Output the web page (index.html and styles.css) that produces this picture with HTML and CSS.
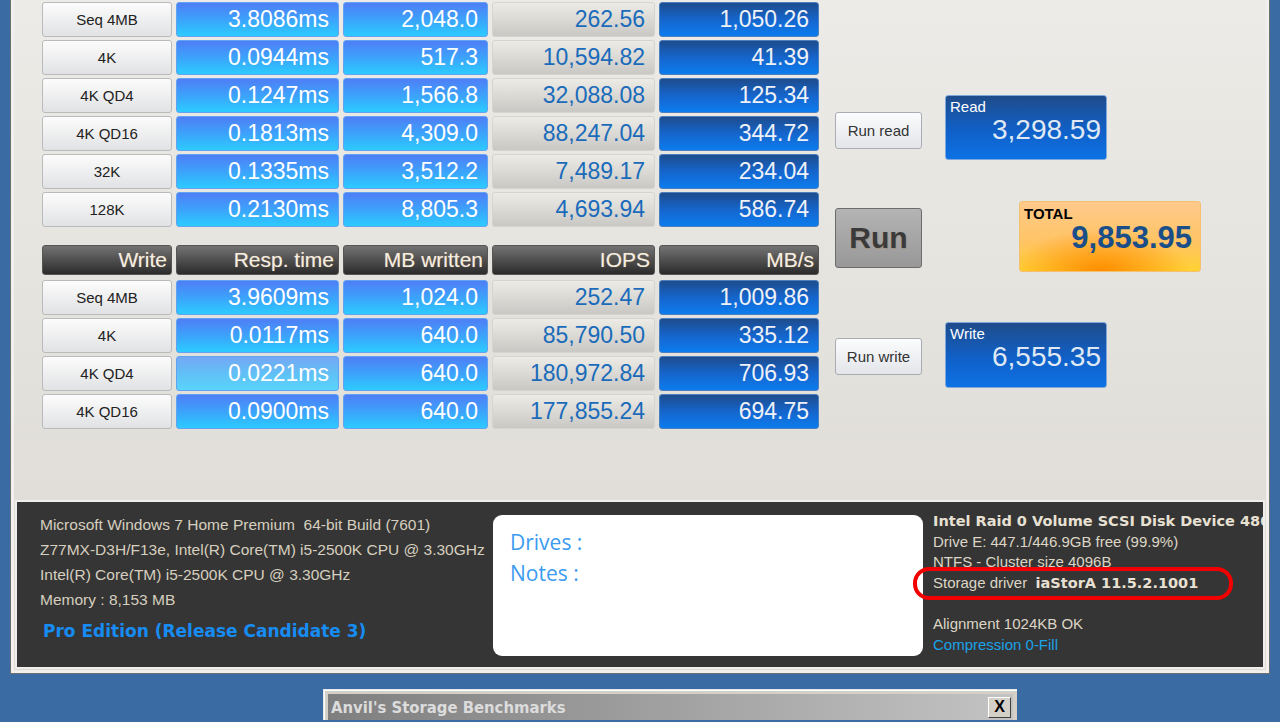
FILE: index.html
```html
<!DOCTYPE html>
<html lang="en">
<head>
    <meta charset="UTF-8">
    <title>Anvil's Storage Benchmarks</title>
    <link rel="stylesheet" href="styles.css">
</head>
<body>
    <div class="window">
        <div class="client">
            <div class="bench">
                <div class="tables">
                    <div class="grid read">
                        <div class="cell label">Seq 4MB</div>
                        <div class="cell resp">3.8086ms</div>
                        <div class="cell mb">2,048.0</div>
                        <div class="cell iops">262.56</div>
                        <div class="cell mbs">1,050.26</div>

                        <div class="cell label">4K</div>
                        <div class="cell resp">0.0944ms</div>
                        <div class="cell mb">517.3</div>
                        <div class="cell iops">10,594.82</div>
                        <div class="cell mbs">41.39</div>

                        <div class="cell label">4K QD4</div>
                        <div class="cell resp">0.1247ms</div>
                        <div class="cell mb">1,566.8</div>
                        <div class="cell iops">32,088.08</div>
                        <div class="cell mbs">125.34</div>

                        <div class="cell label">4K QD16</div>
                        <div class="cell resp">0.1813ms</div>
                        <div class="cell mb">4,309.0</div>
                        <div class="cell iops">88,247.04</div>
                        <div class="cell mbs">344.72</div>

                        <div class="cell label">32K</div>
                        <div class="cell resp">0.1335ms</div>
                        <div class="cell mb">3,512.2</div>
                        <div class="cell iops">7,489.17</div>
                        <div class="cell mbs">234.04</div>

                        <div class="cell label">128K</div>
                        <div class="cell resp">0.2130ms</div>
                        <div class="cell mb">8,805.3</div>
                        <div class="cell iops">4,693.94</div>
                        <div class="cell mbs">586.74</div>
                    </div>

                    <div class="grid write">
                        <div class="cell head">Write</div>
                        <div class="cell head">Resp. time</div>
                        <div class="cell head">MB written</div>
                        <div class="cell head">IOPS</div>
                        <div class="cell head">MB/s</div>

                        <div class="cell label">Seq 4MB</div>
                        <div class="cell resp">3.9609ms</div>
                        <div class="cell mb">1,024.0</div>
                        <div class="cell iops">252.47</div>
                        <div class="cell mbs">1,009.86</div>

                        <div class="cell label">4K</div>
                        <div class="cell resp">0.0117ms</div>
                        <div class="cell mb">640.0</div>
                        <div class="cell iops">85,790.50</div>
                        <div class="cell mbs">335.12</div>

                        <div class="cell label">4K QD4</div>
                        <div class="cell resp pale">0.0221ms</div>
                        <div class="cell mb">640.0</div>
                        <div class="cell iops">180,972.84</div>
                        <div class="cell mbs">706.93</div>

                        <div class="cell label">4K QD16</div>
                        <div class="cell resp">0.0900ms</div>
                        <div class="cell mb">640.0</div>
                        <div class="cell iops">177,855.24</div>
                        <div class="cell mbs">694.75</div>
                    </div>
                </div>

                <div class="side">
                    <div class="side-row row-read">
                        <button class="btn small">Run read</button>
                        <div class="score blue">
                            <div class="score-title">Read</div>
                            <div class="score-value">3,298.59</div>
                        </div>
                    </div>
                    <div class="side-row row-total">
                        <button class="btn run">Run</button>
                        <div class="score total">
                            <div class="score-title">TOTAL</div>
                            <div class="score-value">9,853.95</div>
                        </div>
                    </div>
                    <div class="side-row row-write">
                        <button class="btn small">Run write</button>
                        <div class="score blue">
                            <div class="score-title">Write</div>
                            <div class="score-value">6,555.35</div>
                        </div>
                    </div>
                </div>
            </div>

            <div class="info">
                <div class="sys">
                    <div>Microsoft Windows 7 Home Premium&nbsp; 64-bit Build (7601)</div>
                    <div>Z77MX-D3H/F13e, Intel(R) Core(TM) i5-2500K CPU @ 3.30GHz</div>
                    <div>Intel(R) Core(TM) i5-2500K CPU @ 3.30GHz</div>
                    <div>Memory : 8,153 MB</div>
                    <div class="edition">Pro Edition (Release Candidate 3)</div>
                </div>
                <div class="notes">
                    <div>Drives :</div>
                    <div>Notes :</div>
                </div>
                <div class="drive">
                    <div class="strong">Intel Raid 0 Volume SCSI Disk Device 480GB</div>
                    <div>Drive E: 447.1/446.9GB free (99.9%)</div>
                    <div>NTFS - Cluster size 4096B</div>
                    <div class="driver">Storage driver&nbsp; <b>iaStorA 11.5.2.1001</b><span class="ring"></span></div>
                    <div>&nbsp;</div>
                    <div>Alignment 1024KB OK</div>
                    <div class="link">Compression 0-Fill</div>
                </div>
            </div>
        </div>
    </div>

    <div class="dialog">
        <div class="dialog-title">
            <span>Anvil's Storage Benchmarks</span>
            <span class="close">X</span>
        </div>
    </div>
</body>
</html>
```

FILE: styles.css
```css
*{
    margin:0;
    padding:0;
    box-sizing:border-box;
}
html,body{
    height:100%;
    overflow:hidden;
}
body{
    background-color:#3a6ca3;
    font-family:"Liberation Sans", Arial, sans-serif;
}

/* main window */
.window{
    margin-left:10px;
    width:1260px;
    border:1px solid #6e6e6e;
    border-top:0;
    background-color:#f1f0ed;
    padding:0 3px 3px 3px;
}
.client{
    background:linear-gradient(#ecebe7, #dcd9d3);
    padding-bottom:1px;
}
.bench{
    display:flex;
    height:500px;
    padding:2px 0 0 28px;
}

/* result tables */
.grid{
    display:grid;
    grid-template-columns:130px 163px 145px 163px 160px;
    column-gap:4px;
    row-gap:3px;
    grid-auto-rows:35px;
}
.write{
    margin-top:18px;
    grid-template-rows:32px;
}
.write .head{
    margin-bottom:2px;
}
.cell{
    display:flex;
    align-items:center;
    justify-content:flex-end;
    padding-right:9px;
    border-radius:3px;
    font-size:23px;
    white-space:nowrap;
}
.label{
    justify-content:center;
    padding:0;
    font-size:15px;
    color:#222;
    background:linear-gradient(#fcfcfc, #e1e2e4);
    border:1px solid #b9babc;
}
.resp,
.mb{
    color:#fff;
    background:linear-gradient(#4f7ef6, #3aa6fb 55%, #2ccbff);
    border:1px solid #62a2f2;
}
.pale{
    background:linear-gradient(#74a8f4, #5fc2f6 55%, #5ad4fb);
}
.iops{
    color:#1a6bba;
    background:linear-gradient(#edebe6, #c9c8c4);
    border:1px solid #d6d4cf;
}
.mbs{
    color:#eef2f8;
    background:linear-gradient(#1e4c8d, #1565cc 50%, #0c7cee);
    border:1px solid #4c7fbf;
}
.head{
    padding-right:4px;
    font-size:21px;
    color:#f2eee4;
    text-shadow:0 0 1px rgba(255,190,110,.55);
    background:linear-gradient(#737373, #2b2b2b);
    border:1px solid #555;
}

/* buttons and score boxes */
.side{
    margin-left:16px;
    padding-top:93px;
}
.side-row{
    display:flex;
    align-items:flex-start;
}
.row-read{ height:65px; }
.row-total{ height:71px; margin-top:41px; }
.row-write{ height:66px; margin-top:50px; }
.btn{
    width:87px;
    border-radius:3px;
    font-family:"Liberation Sans", Arial, sans-serif;
    cursor:pointer;
}
.small{
    height:37px;
    margin-top:17px;
    font-size:15px;
    color:#333;
    background:linear-gradient(#fbfcfd, #e3e5e9);
    border:1px solid #a9adb3;
}
.row-write .small{
    margin-top:16px;
}
.run{
    height:60px;
    margin-top:7px;
    font-size:30px;
    font-weight:bold;
    color:#3a3a3a;
    text-shadow:1px 1px 0 rgba(160,120,70,.35);
    background:linear-gradient(#b4b4b4, #989898);
    border:1px solid #6c6c6c;
}
.score{
    border-radius:3px;
    height:100%;
    padding:2px 5px 0 4px;
}
.blue{
    width:162px;
    margin-left:23px;
    color:#dfe8f3;
    background:linear-gradient(#1f4c8b, #1060c8 55%, #0d72e4);
    border:1px solid #7ea7dc;
}
.score-title{
    font-size:15px;
    line-height:18px;
    color:#fff;
}
.score-value{
    text-align:right;
    font-size:28px;
    line-height:28px;
}
.total{
    width:182px;
    margin-left:97px;
    background:
        radial-gradient(ellipse 50% 60% at 45% 100%, #ff8c00, rgba(255,150,20,0)),
        linear-gradient(#ffc98c, #ffc462 60%, #ffd232);
    border:1px solid #f5c070;
}
.total .score-title{
    font-weight:bold;
    color:#000;
    line-height:19px;
}
.total .score-value{
    font-size:31px;
    font-weight:bold;
    color:#1a4e88;
    line-height:30px;
    padding-right:3px;
}

/* system info strip */
.info{
    display:flex;
    height:169px;
    margin:0 1px;
    border:2px solid #efeeea;
    background-color:#353535;
    overflow:hidden;
    font-size:15px;
}
.sys{
    flex:none;
    width:476px;
    padding:10px 0 0 23px;
    line-height:25px;
    font-size:15.5px;
    color:#d6cfbf;
    white-space:nowrap;
}
.edition{
    margin:7px 0 0 3px;
    font-family:"DejaVu Sans", Verdana, sans-serif;
    font-size:17px;
    font-weight:bold;
    color:#178cf2;
}
.notes{
    flex:none;
    width:430px;
    height:141px;
    margin-top:13px;
    padding:12px 0 0 17px;
    background-color:#fff;
    border-radius:9px;
    font-family:"Open Sans", "Noto Sans", sans-serif;
    font-size:21px;
    line-height:31px;
    color:#3c9bf0;
}
.drive{
    flex:none;
    margin-left:10px;
    padding-top:9px;
    color:#ddd5c5;
    white-space:nowrap;
}
.drive div{
    height:20.7px;
    line-height:20.7px;
}
.strong,
.driver b{
    font-family:"DejaVu Sans", Verdana, sans-serif;
    font-size:14.5px;
    font-weight:bold;
    color:#e8e1d3;
}
.driver{
    position:relative;
}
.ring{
    position:absolute;
    left:-20px;
    top:-6px;
    width:320px;
    height:33px;
    border:4px solid #f20000;
    border-radius:16px;
}
.link{
    color:#1ba2e8;
}

/* second window peeking in below */
.dialog{
    width:694px;
    margin:15px 0 0 323px;
    padding:4px 4px 0 4px;
    background-color:#d4d0c8;
    border-top:1px solid #e8e8e8;
    border-left:1px solid #e8e8e8;
    box-shadow:inset 1px 1px 0 #fff;
}
.dialog-title{
    display:flex;
    justify-content:space-between;
    align-items:center;
    height:26px;
    padding:0 2px 0 3px;
    background:linear-gradient(to right, #7f7f7f, #c3c3c3);
    font-family:"Liberation Sans Narrow", "DejaVu Sans Condensed", "Liberation Sans", sans-serif;
    font-size:16.5px;
    font-weight:bold;
    color:#dcdcdc;
}
.close{
    width:23px;
    height:21px;
    display:flex;
    align-items:center;
    justify-content:center;
    font-family:"Liberation Sans", Arial, sans-serif;
    font-size:16px;
    color:#000;
    background-color:#d4d0c8;
    border:1px solid;
    border-color:#fff #404040 #404040 #fff;
}
```
